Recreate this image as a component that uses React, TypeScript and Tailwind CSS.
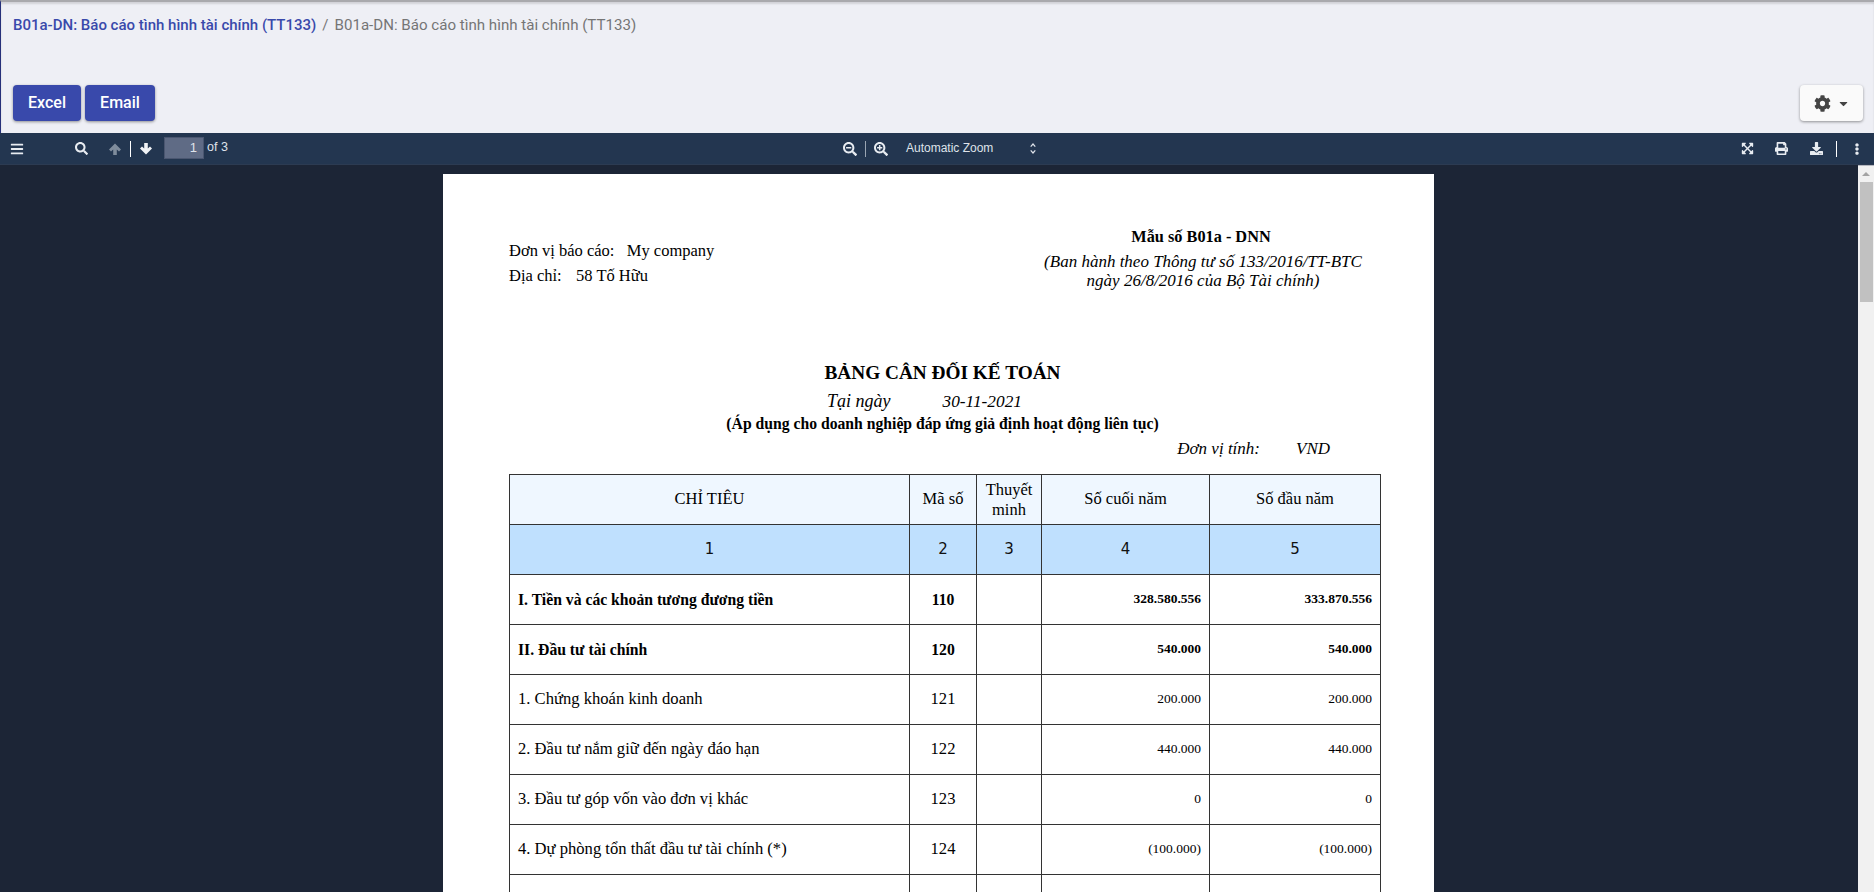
import { FaBars, FaSearch, FaSearchMinus, FaSearchPlus, FaExpandArrowsAlt, FaPrint, FaDownload, FaCog, FaCaretDown, FaEllipsisV } from 'react-icons/fa';

const rows = [
  { label: 'I. Tiền và các khoản tương đương tiền', code: '110', end: '328.580.556', start: '333.870.556', bold: true },
  { label: 'II. Đầu tư tài chính', code: '120', end: '540.000', start: '540.000', bold: true },
  { label: '1. Chứng khoán kinh doanh', code: '121', end: '200.000', start: '200.000' },
  { label: '2. Đầu tư nắm giữ đến ngày đáo hạn', code: '122', end: '440.000', start: '440.000' },
  { label: '3. Đầu tư góp vốn vào đơn vị khác', code: '123', end: '0', start: '0' },
  { label: '4. Dự phòng tổn thất đầu tư tài chính (*)', code: '124', end: '(100.000)', start: '(100.000)' },
  { label: '', code: '', end: '', start: '' },
];

const cell = 'border border-[#333] align-middle';

function Toolbar() {
  return (
    <div className="relative flex h-[32px] items-center justify-between border-b border-[#2c3b52] bg-[#233650] text-[#e8ecf1]">
      <div className="flex items-center">
        <FaBars className="ml-[10px] text-[14px]" />
        <FaSearch className="ml-[51px] text-[13px]" />
        {/* chunky pdf.js arrows, the icon packs only have thin ones */}
        <svg className="ml-[21px]" width="12" height="12" viewBox="0 0 12 12" fill="#7f8c9c"><path d="M6 .5 12 6.5 10 8.5 7.8 6.4V12H4.2V6.4L2 8.5 0 6.5z" /></svg>
        <div className="ml-[9px] h-[16px] w-px bg-white" />
        <svg className="ml-[9px]" width="12" height="12" viewBox="0 0 12 12" fill="#f1f3f6"><path d="M6 11.5 12 5.5 10 3.5 7.8 5.6V0H4.2V5.6L2 3.5 0 5.5z" /></svg>
        <div className="mb-[2px] ml-[12px] flex h-[22px] w-[40px] items-center justify-end border border-[#4a5670] bg-[#5f6b85] pr-[6px] font-['Liberation_Sans',sans-serif] text-[13px] text-[#dfe3ea]">1</div>
        <span className="mb-[2px] ml-[3px] font-['Liberation_Sans',sans-serif] text-[12.5px] text-[#dfe3ea]">of 3</span>
      </div>
      <div className="absolute left-[843px] flex items-center">
        <FaSearchMinus className="text-[14px]" />
        <div className="ml-[8px] h-[16px] w-px bg-[#9aa5b3]" />
        <FaSearchPlus className="ml-[8px] text-[14px]" />
        <span className="mb-[2px] ml-[18px] font-['Liberation_Sans',sans-serif] text-[12px] text-[#dfe3ea]">Automatic Zoom</span>
        <svg className="ml-[37px]" width="6" height="11" viewBox="0 0 6 11" fill="none" stroke="#dfe3ea" strokeWidth="1.2"><path d="M.7 3.6 3 1l2.3 2.6M.7 7.4 3 10l2.3-2.6" /></svg>
      </div>
      <div className="flex items-center pr-[11px]">
        <FaExpandArrowsAlt className="text-[13px]" />
        <FaPrint className="ml-[21px] text-[13px]" />
        <FaDownload className="ml-[22px] text-[13px]" />
        <div className="ml-[13px] h-[16px] w-px bg-white" />
        <FaEllipsisV className="ml-[14px] text-[12px]" />
      </div>
    </div>
  );
}

function Page() {
  return (
    <div className="ml-[443px] mt-[9px] w-[991px] shrink-0 bg-white pt-[51px] font-['Liberation_Serif',serif] text-black">
      <div className="flex justify-between pl-[66px] pr-[71px]">
        <div className="pt-[13px] text-[16.5px] leading-[25px]">
          <p>Đơn vị báo cáo:&nbsp;&nbsp; My company</p>
          <p>Địa chỉ:&nbsp;&nbsp;&nbsp;<span className="ml-[2px]">58 Tố Hữu</span></p>
        </div>
        <div className="w-[320px] text-center">
          <p className="pr-[4px] text-[16.3px] leading-[24px] font-bold">Mẫu số B01a - DNN</p>
          <p className="mt-[3px] text-[17px] leading-[19px] whitespace-nowrap italic">(Ban hành theo Thông tư số 133/2016/TT-BTC<br />ngày 26/8/2016 của Bộ Tài chính)</p>
        </div>
      </div>
      <div className="mt-[70px] text-center">
        <p className="pl-[8px] text-[19.3px] leading-[26px] font-bold">BẢNG CÂN ĐỐI KẾ TOÁN</p>
        <p className="mt-[5px] pr-[28px] text-[17.3px] leading-[21px] italic">
          <span className="text-[18px]">Tại ngày</span>
          <span className="ml-[52px]">30-11-2021</span>
        </p>
        <p className="pl-[8px] text-[15.7px] leading-[23px] font-bold">(Áp dụng cho doanh nghiệp đáp ứng giả định hoạt động liên tục)</p>
        <p className="mt-[4px] flex justify-end pr-[104px] text-[17px] leading-[20px] italic">
          <span>Đơn vị tính:</span>
          <span className="ml-[36px]">VND</span>
        </p>
      </div>
      <div className="pl-[66px] pt-[15px]">
        <table className="w-[871px] table-fixed border-collapse">
          <colgroup>
            <col className="w-[400px]" />
            <col className="w-[67px]" />
            <col className="w-[65px]" />
            <col className="w-[168px]" />
            <col className="w-[171px]" />
          </colgroup>
          <thead>
            <tr className="h-[50px] bg-[#eff7ff] text-[16.5px]">
              <th className={`${cell} font-normal`}>CHỈ TIÊU</th>
              <th className={`${cell} font-normal`}>Mã số</th>
              <th className={`${cell} leading-[20px] font-normal`}>Thuyết minh</th>
              <th className={`${cell} font-normal`}>Số cuối năm</th>
              <th className={`${cell} font-normal`}>Số đầu năm</th>
            </tr>
            <tr className="h-[50px] bg-[#bfe0fe] font-['DejaVu_Sans',sans-serif] text-[15px] text-[#111]">
              {['1', '2', '3', '4', '5'].map((n) => (
                <th key={n} className={`${cell} font-normal`}>{n}</th>
              ))}
            </tr>
          </thead>
          <tbody>
            {rows.map((r, i) => (
              <tr key={i} className={`h-[50px] ${r.bold ? 'font-bold' : ''}`}>
                <td className={`${cell} pl-[8px] ${r.bold ? 'text-[15.7px]' : 'text-[16.6px]'}`}>{r.label}</td>
                <td className={`${cell} text-center ${r.bold ? 'text-[15.7px]' : 'text-[16.6px]'}`}>{r.code}</td>
                <td className={cell} />
                <td className={`${cell} pr-[8px] text-right text-[13.5px]`}>{r.end}</td>
                <td className={`${cell} pr-[8px] text-right text-[13.5px]`}>{r.start}</td>
              </tr>
            ))}
          </tbody>
        </table>
      </div>
    </div>
  );
}

export default function App() {
  return (
    <div className="flex h-[892px] w-[1874px] flex-col overflow-hidden bg-[#1c2536]">
      <div className="flex h-[133px] flex-col border-t-2 border-l border-t-[#a9a9ad] border-l-[#26307a] bg-[#eeeff5] font-['Roboto',sans-serif] shadow-[inset_0_2px_2px_rgba(0,0,0,0.12)]">
        <div className="flex h-[46px] items-center pl-[12px] text-[15px]">
          <span className="font-medium text-[#3949ab]">B01a-DN: Báo cáo tình hình tài chính (TT133)</span>
          <span className="mx-[6px] text-[#777]">/</span>
          <span className="text-[15.1px] text-[#757575]">B01a-DN: Báo cáo tình hình tài chính (TT133)</span>
        </div>
        <div className="mt-[37px] flex items-center justify-between pr-[11px] pl-[12px]">
          <div className="flex gap-[4px]">
            <button className="h-[36px] w-[68px] rounded-[4px] bg-[#3949ab] text-[16px] font-medium text-white shadow-[0_1px_3px_rgba(0,0,0,0.4)]">Excel</button>
            <button className="h-[36px] w-[70px] rounded-[4px] bg-[#3949ab] text-[16px] font-medium text-white shadow-[0_1px_3px_rgba(0,0,0,0.4)]">Email</button>
          </div>
          <button className="flex h-[36px] w-[63px] items-center justify-center gap-[6px] rounded-[4px] bg-[#fafafa] text-[#444] shadow-[0_1px_3px_rgba(0,0,0,0.4)]">
            <FaCog className="text-[17px]" />
            <FaCaretDown className="text-[13px]" />
          </button>
        </div>
      </div>
      <Toolbar />
      <div className="relative flex flex-1 overflow-hidden">
        <Page />
        <div className="absolute top-0 right-0 flex h-full w-[16px] flex-col items-center border-t border-[#b5b8c0] bg-[#f1f1f1]">
          <svg className="mt-[6px]" width="8" height="4" viewBox="0 0 8 4" fill="#a3a3a3"><path d="M4 0 8 4H0z" /></svg>
          <div className="mt-[6px] ml-[1px] h-[120px] w-[13px] bg-[#c1c1c1]" />
        </div>
      </div>
    </div>
  );
}
